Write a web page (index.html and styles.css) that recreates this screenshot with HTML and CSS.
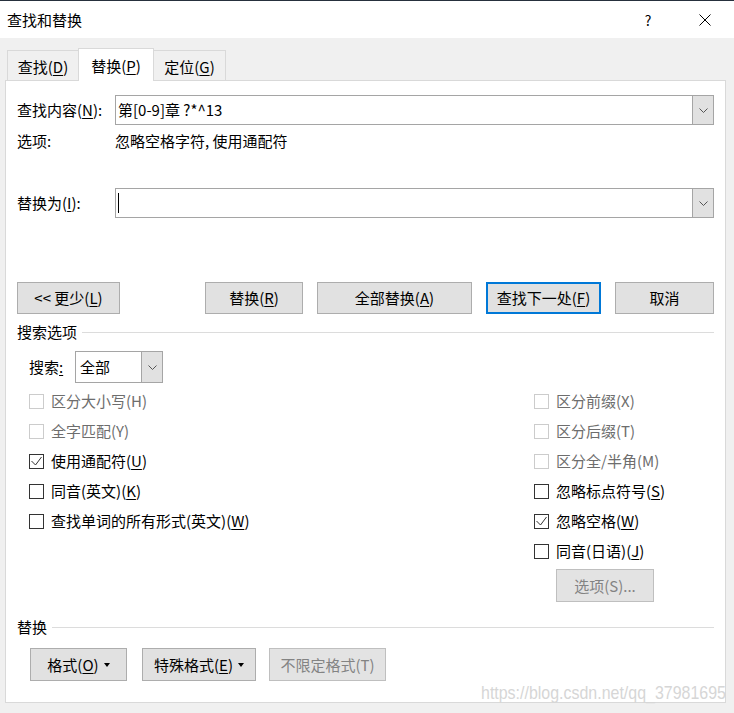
FILE: index.html
```html
<!DOCTYPE html>
<html lang="zh-CN">
<head>
<meta charset="utf-8">
<title>查找和替换</title>
<link rel="stylesheet" href="styles.css">
</head>
<body>
<div class="titlebar">
  <span class="title">查找和替换</span>
  <span class="help">?</span>
  <span class="close"><svg width="12" height="12" viewBox="0 0 12 12"><path d="M0.5 0.5L11.5 11.5M11.5 0.5L0.5 11.5" stroke="#000" stroke-width="1" fill="none"/></svg></span>
</div>
<div class="tabs">
  <div class="tab tab-find">查找(<u>D</u>)</div>
  <div class="tab tab-replace active">替换(<u>P</u>)</div>
  <div class="tab tab-goto">定位(<u>G</u>)</div>
</div>
<div class="panel">
  <div class="field-row row-find">
    <span class="field-label">查找内容(<u>N</u>):</span>
    <div class="combo">
      <div class="combo-text">第[0-9]章 ?*^13</div>
      <div class="combo-btn"><svg width="9" height="5" viewBox="0 0 9 5"><path d="M0.5 0.5L4.5 4.5L8.5 0.5" fill="none" stroke="#555" stroke-width="1"/></svg></div>
    </div>
  </div>
  <div class="options-row">
    <span class="field-label">选项:</span>
    <span>忽略空格字符, 使用通配符</span>
  </div>
  <div class="field-row row-replace">
    <span class="field-label">替换为(<u>I</u>):</span>
    <div class="combo">
      <div class="combo-text"><span class="caret"></span></div>
      <div class="combo-btn"><svg width="9" height="5" viewBox="0 0 9 5"><path d="M0.5 0.5L4.5 4.5L8.5 0.5" fill="none" stroke="#555" stroke-width="1"/></svg></div>
    </div>
  </div>
  <div class="button-row">
    <div class="btn btn-less">&lt;&lt; 更少(<u>L</u>)</div>
    <div class="btn btn-replace">替换(<u>R</u>)</div>
    <div class="btn btn-all">全部替换(<u>A</u>)</div>
    <div class="btn btn-next focus">查找下一处(<u>F</u>)</div>
    <div class="btn btn-cancel">取消</div>
  </div>
  <div class="section-head head-search">
    <span>搜索选项</span>
    <div class="rule"></div>
  </div>
  <div class="search-row">
    <span class="search-label">搜索<u>:</u></span>
    <div class="combo combo-small">
      <div class="combo-text">全部</div>
      <div class="combo-btn"><svg width="9" height="5" viewBox="0 0 9 5"><path d="M0.5 0.5L4.5 4.5L8.5 0.5" fill="none" stroke="#555" stroke-width="1"/></svg></div>
    </div>
  </div>
  <div class="checks">
    <div class="col">
      <div class="check disabled"><span class="box"></span><span>区分大小写(H)</span></div>
      <div class="check disabled"><span class="box"></span><span>全字匹配(Y)</span></div>
      <div class="check"><span class="box"><svg width="13" height="13" viewBox="0 0 13 13"><path d="M1.5 6L5.5 10L11.5 2" fill="none" stroke="#333" stroke-width="1"/></svg></span><span>使用通配符(<u>U</u>)</span></div>
      <div class="check"><span class="box"></span><span>同音(英文)(<u>K</u>)</span></div>
      <div class="check"><span class="box"></span><span>查找单词的所有形式(英文)(<u>W</u>)</span></div>
    </div>
    <div class="col">
      <div class="check disabled"><span class="box"></span><span>区分前缀(X)</span></div>
      <div class="check disabled"><span class="box"></span><span>区分后缀(T)</span></div>
      <div class="check disabled"><span class="box"></span><span>区分全/半角(M)</span></div>
      <div class="check"><span class="box"></span><span>忽略标点符号(<u>S</u>)</span></div>
      <div class="check"><span class="box"><svg width="13" height="13" viewBox="0 0 13 13"><path d="M1.5 6L5.5 10L11.5 2" fill="none" stroke="#333" stroke-width="1"/></svg></span><span>忽略空格(<u>W</u>)</span></div>
      <div class="check"><span class="box"></span><span>同音(日语)(<u>J</u>)</span></div>
      <div class="btn btn-options disabled-btn">选项(S)...</div>
    </div>
  </div>
  <div class="section-head head-replace">
    <span>替换</span>
    <div class="rule"></div>
  </div>
  <div class="format-row">
    <div class="btn btn-format">格式(<u>O</u>)<svg class="tri" width="6" height="4" viewBox="0 0 6 4"><path d="M0 0H6L3 4Z" fill="#000"/></svg></div>
    <div class="btn btn-special">特殊格式(<u>E</u>)<svg class="tri" width="6" height="4" viewBox="0 0 6 4"><path d="M0 0H6L3 4Z" fill="#000"/></svg></div>
    <div class="btn btn-noformat disabled-btn">不限定格式(T)</div>
  </div>
</div>
<div class="watermark">https://blog.csdn.net/qq_37981695</div>
</body>
</html>
```
FILE: styles.css
```css
* { box-sizing: border-box; }
html, body { margin: 0; padding: 0; }
body {
  width: 734px;
  height: 713px;
  background: #f0f0f0;
  font-family: "Noto Sans CJK SC", sans-serif;
  font-size: 15px;
  color: #000;
  overflow: hidden;
  position: relative;
}
u {
  text-decoration: underline;
  text-decoration-thickness: 1px;
  text-underline-offset: 2px;
}

/* title bar */
.titlebar {
  height: 38px;
  background: #fff;
  border-top: 1px solid #26303d;
  display: flex;
  align-items: center;
  padding-left: 7px;
}
.title { flex: 1; line-height: 20px; }
.help {
  width: 14px;
  text-align: center;
  font-size: 14px;
  line-height: 18px;
  margin-right: 43px;
}
.close {
  width: 14px;
  height: 14px;
  display: flex;
  align-items: center;
  justify-content: center;
  margin-right: 22px;
}

/* tabs */
.tabs {
  height: 42px;
  display: flex;
  align-items: flex-end;
  padding-left: 7px;
}
.tab {
  height: 30px;
  border: 1px solid #d9d9d9;
  border-bottom: none;
  background: #f0f0f0;
  text-align: center;
  padding-top: 4px;
  line-height: 24px;
}
.tab-find { width: 71px; border-right: none; }
.tab-goto { width: 72px; border-left: none; }
.tab.active {
  width: 76px;
  height: 33px;
  margin-bottom: -1px;
  background: #fff;
  position: relative;
  z-index: 1;
  padding-top: 5px;
}

/* panel */
.panel {
  margin-left: 5px;
  width: 721px;
  height: 623px;
  background: #fff;
  border: 1px solid #d9d9d9;
  padding: 0 11px;
}
.field-row {
  display: flex;
  align-items: center;
  height: 30px;
}
.row-find { margin-top: 14px; }
.row-replace { margin-top: 37px; }
.field-label { width: 98px; line-height: 20px; flex: none; }
.options-row {
  margin-top: 6px;
  height: 20px;
  line-height: 20px;
  display: flex;
}
.combo {
  flex: 1;
  height: 30px;
  border: 1px solid #a5a5a5;
  background: #fff;
  display: flex;
}
.combo-text {
  flex: 1;
  padding-left: 2px;
  line-height: 28px;
  display: flex;
  align-items: center;
  white-space: nowrap;
}
.caret {
  width: 1px;
  height: 20px;
  background: #000;
}
.combo-btn {
  width: 21px;
  background: #e1e1e1;
  border-left: 1px solid #a5a5a5;
  display: flex;
  align-items: center;
  justify-content: center;
}

/* buttons */
.button-row {
  margin-top: 64px;
  display: flex;
  gap: 14px;
  height: 32px;
}
.btn {
  height: 32px;
  background: #e1e1e1;
  border: 1px solid #adadad;
  display: flex;
  align-items: center;
  justify-content: center;
  line-height: 20px;
  white-space: nowrap;
}
.btn.focus { border: 2px solid #0078d7; }
.btn-less { width: 103px; margin-right: auto; }
.btn-replace { width: 98px; }
.btn-all { width: 155px; }
.btn-next { width: 115px; }
.btn-cancel { width: 99px; }
.disabled-btn {
  color: #838383;
  border-color: #bfbfbf;
  background: #e3e3e3;
}

/* section heads */
.section-head {
  display: flex;
  align-items: center;
  gap: 5px;
  height: 20px;
  line-height: 20px;
}
.head-search { margin-top: 8px; }
.head-replace { margin-top: 15px; }
.rule { flex: 1; height: 1px; background: #dcdcdc; }

/* search row */
.search-row {
  margin-top: 9px;
  height: 32px;
  display: flex;
  align-items: center;
  padding-left: 12px;
}
.search-label { width: 46px; line-height: 20px; }
.combo-small { flex: none; width: 88px; height: 32px; }
.combo-small .combo-text { padding-left: 4px; }

/* checkboxes */
.checks {
  margin-top: 3px;
  display: grid;
  grid-template-columns: 505px 1fr;
  padding-left: 12px;
}
.check {
  height: 30px;
  display: flex;
  align-items: center;
  gap: 7px;
  line-height: 20px;
  white-space: nowrap;
}
.box {
  width: 15px;
  height: 15px;
  border: 1px solid #333;
  background: #fff;
  display: flex;
  flex: none;
}
.check.disabled { color: #6d6d6d; }
.check.disabled .box { border-color: #cccccc; }
.btn-options {
  margin-top: 3px;
  margin-left: 22px;
  width: 98px;
  height: 33px;
}

/* format row */
.format-row {
  margin-top: 11px;
  display: flex;
  padding-left: 13px;
}
.format-row .btn { height: 33px; }
.btn-format { width: 97px; }
.btn-special { width: 114px; margin-left: 15px; }
.btn-noformat { width: 117px; margin-left: 13px; }
.tri { margin-left: 5px; }

/* watermark overlay */
.watermark {
  position: absolute;
  left: 481px;
  top: 682px;
  font-family: "Liberation Sans", sans-serif;
  font-size: 19px;
  line-height: 22px;
  color: #d6d6d6;
  transform: scaleX(0.84);
  transform-origin: left center;
  white-space: nowrap;
}
```
